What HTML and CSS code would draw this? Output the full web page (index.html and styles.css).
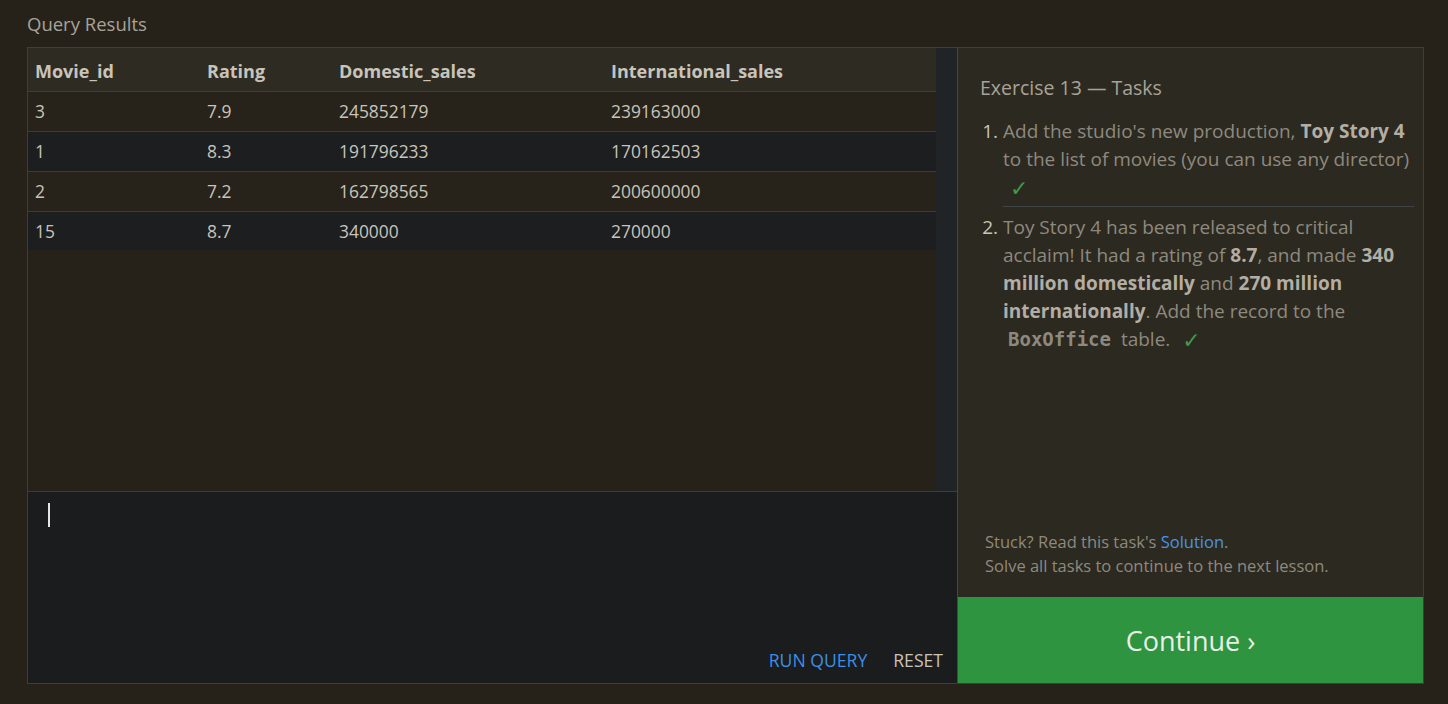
FILE: index.html
```html
<!DOCTYPE html>
<html lang="en">
<head>
<meta charset="utf-8">
<title>Query Results</title>
<link rel="stylesheet" href="styles.css">
</head>
<body>
<div class="page">
  <h2 class="title">Query Results</h2>
  <div class="frame">
    <div class="left">
      <div class="results">
        <div class="table-wrap">
          <table class="grid">
            <thead>
              <tr><th class="c1">Movie_id</th><th class="c2">Rating</th><th class="c3">Domestic_sales</th><th>International_sales</th></tr>
            </thead>
            <tbody>
              <tr><td>3</td><td>7.9</td><td>245852179</td><td>239163000</td></tr>
              <tr><td>1</td><td>8.3</td><td>191796233</td><td>170162503</td></tr>
              <tr><td>2</td><td>7.2</td><td>162798565</td><td>200600000</td></tr>
              <tr><td>15</td><td>8.7</td><td>340000</td><td>270000</td></tr>
            </tbody>
          </table>
        </div>
        <div class="scroll-track"></div>
      </div>
      <div class="editor">
        <div class="cursor-line"><span class="cursor"></span></div>
        <div class="actions">
          <span class="btn run">RUN QUERY</span>
          <span class="btn reset">RESET</span>
        </div>
      </div>
    </div>
    <div class="right">
      <div class="tasks">
        <h3 class="tasks-title">Exercise 13 — Tasks</h3>
        <ol class="task-list">
          <li class="task done">Add the studio's new production, <b>Toy Story 4</b> to the list of movies (you can use any director) <span class="check">✓</span></li>
          <li class="task done">Toy Story 4 has been released to critical acclaim! It had a rating of <b>8.7</b>, and made <b>340 million domestically</b> and <b>270 million internationally</b>. Add the record to the <code>BoxOffice</code> table. <span class="check">✓</span></li>
        </ol>
        <div class="help">
          <p>Stuck? Read this task's <a class="link">Solution</a>.</p>
          <p>Solve all tasks to continue to the next lesson.</p>
        </div>
      </div>
      <div class="continue">Continue ›</div>
    </div>
  </div>
</div>
</body>
</html>
```

FILE: styles.css
```css
* { box-sizing: border-box; }
html, body {
  margin: 0;
  padding: 0;
  background: #26221a;
  font-family: "Open Sans", "Noto Sans", sans-serif;
  color: #c9c4ba;
}
.page {
  padding: 12px 24px 20px 27px;
}
.title {
  margin: 0 0 11px 0;
  font-weight: 400;
  font-size: 18.5px;
  line-height: 24px;
  color: #a8a398;
}
.frame {
  display: flex;
  width: 1397px;
  height: 637px;
  border: 1px solid #3c3d3e;
  border-top-color: #3b3f43;
}
.left {
  width: 930px;
  display: flex;
  flex-direction: column;
  border-right: 1px solid #44484b;
}
.results {
  flex: 0 0 443px;
  display: flex;
  background: #26221a;
}
.table-wrap {
  flex: 1;
}
.scroll-track {
  width: 21px;
  background: #212426;
}
.grid {
  width: 100%;
  border-collapse: collapse;
  font-size: 17.4px;
}
.grid th {
  text-align: left;
  font-weight: 700;
  font-size: 18px;
  height: 43px;
  padding: 4px 7px 0 7px;
  background: #2e2b23;
  border-bottom: 1px solid #3d3e3e;
  color: #c9c4ba;
}
.grid th.c1 { width: 172px; }
.grid th.c2 { width: 132px; }
.grid th.c3 { width: 272px; }
.grid td {
  height: 40px;
  padding: 0 7px;
  border-bottom: 1px solid #393b3c;
}
.grid tbody tr:nth-child(odd) td { background: #27231b; }
.grid tbody tr:nth-child(even) td { background: #1c1e20; }
.grid tbody tr:last-child td { border-bottom: none; height: 39px; }
.editor {
  flex: 1;
  background: #1b1c1e;
  border-top: 1px solid #3b3c3d;
  display: flex;
  flex-direction: column;
  justify-content: space-between;
  padding: 11px 14px 12px 20px;
}
.cursor-line { height: 26px; }
.cursor {
  display: inline-block;
  width: 2px;
  height: 24px;
  background: #e6e6e6;
}
.actions {
  display: flex;
  justify-content: flex-end;
  gap: 26px;
  font-size: 17.6px;
  line-height: 22px;
}
.btn.run { color: #3b8fe6; }
.btn.reset { color: #c9c4ba; }
.right {
  flex: 1;
  display: flex;
  flex-direction: column;
  background: #2c2920;
}
.tasks {
  flex: 1;
  display: flex;
  flex-direction: column;
  padding: 26px 9px 0 22px;
}
.tasks-title {
  margin: 0 0 15px 0;
  font-weight: 400;
  font-size: 19.5px;
  line-height: 28px;
  color: #a8a398;
}
.task-list {
  margin: 0;
  padding: 0 0 0 23px;
  font-size: 19px;
  line-height: 28px;
  color: #8e897f;
}
.task-list li::marker { color: #c9c4ba; }
.task-list b { color: #b3aea4; }
.task {
  padding-bottom: 5px;
}
.task + .task {
  border-top: 1px solid #3f4447;
  padding-top: 6px;
}
.check {
  font-family: "DejaVu Sans", sans-serif;
  font-size: 22px;
  line-height: 0;
  vertical-align: -2px;
  color: #3f9a48;
  margin-left: 7px;
}
code {
  font-family: "DejaVu Sans Mono", "Liberation Mono", monospace;
  font-weight: 700;
  font-size: 19px;
  color: #8e897f;
  padding: 0 5px;
}
.help {
  margin-top: auto;
  padding: 0 0 19px 5px;
  font-size: 16.5px;
  line-height: 24px;
  color: #8e897f;
}
.help p { margin: 0; }
.link { color: #4a93e4; }
.continue {
  height: 86px;
  background: #2e943f;
  color: #e9efe8;
  font-size: 27px;
  display: flex;
  align-items: center;
  justify-content: center;
}
```
